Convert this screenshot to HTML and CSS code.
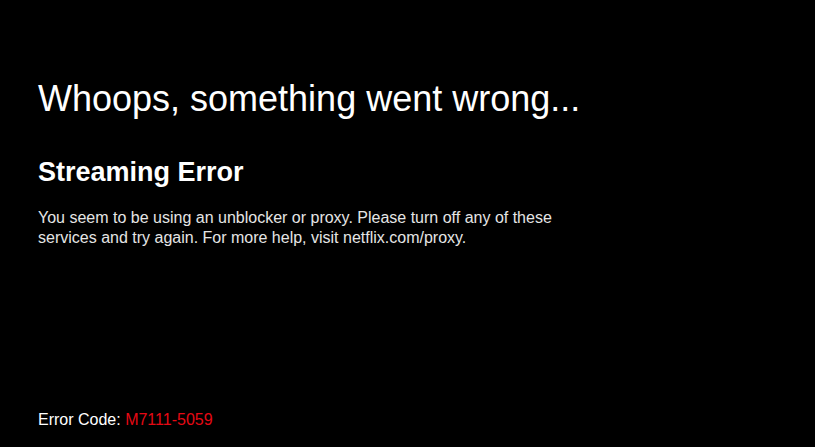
FILE: index.html
```html
<!DOCTYPE html>
<html>
<head>
<meta charset="utf-8">
<link rel="stylesheet" href="styles.css">
</head>
<body>
<div class="page">
  <div class="content">
    <h1 class="title">Whoops, something went wrong...</h1>
    <h2 class="subtitle">Streaming Error</h2>
    <p class="message">You seem to be using an unblocker or proxy. Please turn off any of these services and try again. For more help, visit netflix.com/proxy.</p>
  </div>
  <div class="footer">Error Code: <span class="code">M7111-5059</span></div>
</div>
</body>
</html>
```
FILE: styles.css
```css
html, body {
  margin: 0;
  padding: 0;
  background: #000;
  height: 100%;
}
.page {
  box-sizing: border-box;
  height: 447px;
  padding: 78px 38px 17px 38px;
  display: flex;
  flex-direction: column;
  font-family: "Liberation Sans", Arial, sans-serif;
  color: #fff;
}
.title {
  margin: 0;
  font-size: 36px;
  font-weight: normal;
  line-height: 42px;
}
.subtitle {
  margin: 36px 0 0 0;
  font-size: 27px;
  font-weight: bold;
  line-height: 32px;
}
.message {
  margin: 20px 0 0 0;
  font-size: 16px;
  line-height: 20px;
  color: #e5e5e5;
  width: 560px;
}
.footer {
  margin-top: auto;
  font-size: 16px;
  line-height: 20px;
}
.code {
  color: #e50914;
}
```
